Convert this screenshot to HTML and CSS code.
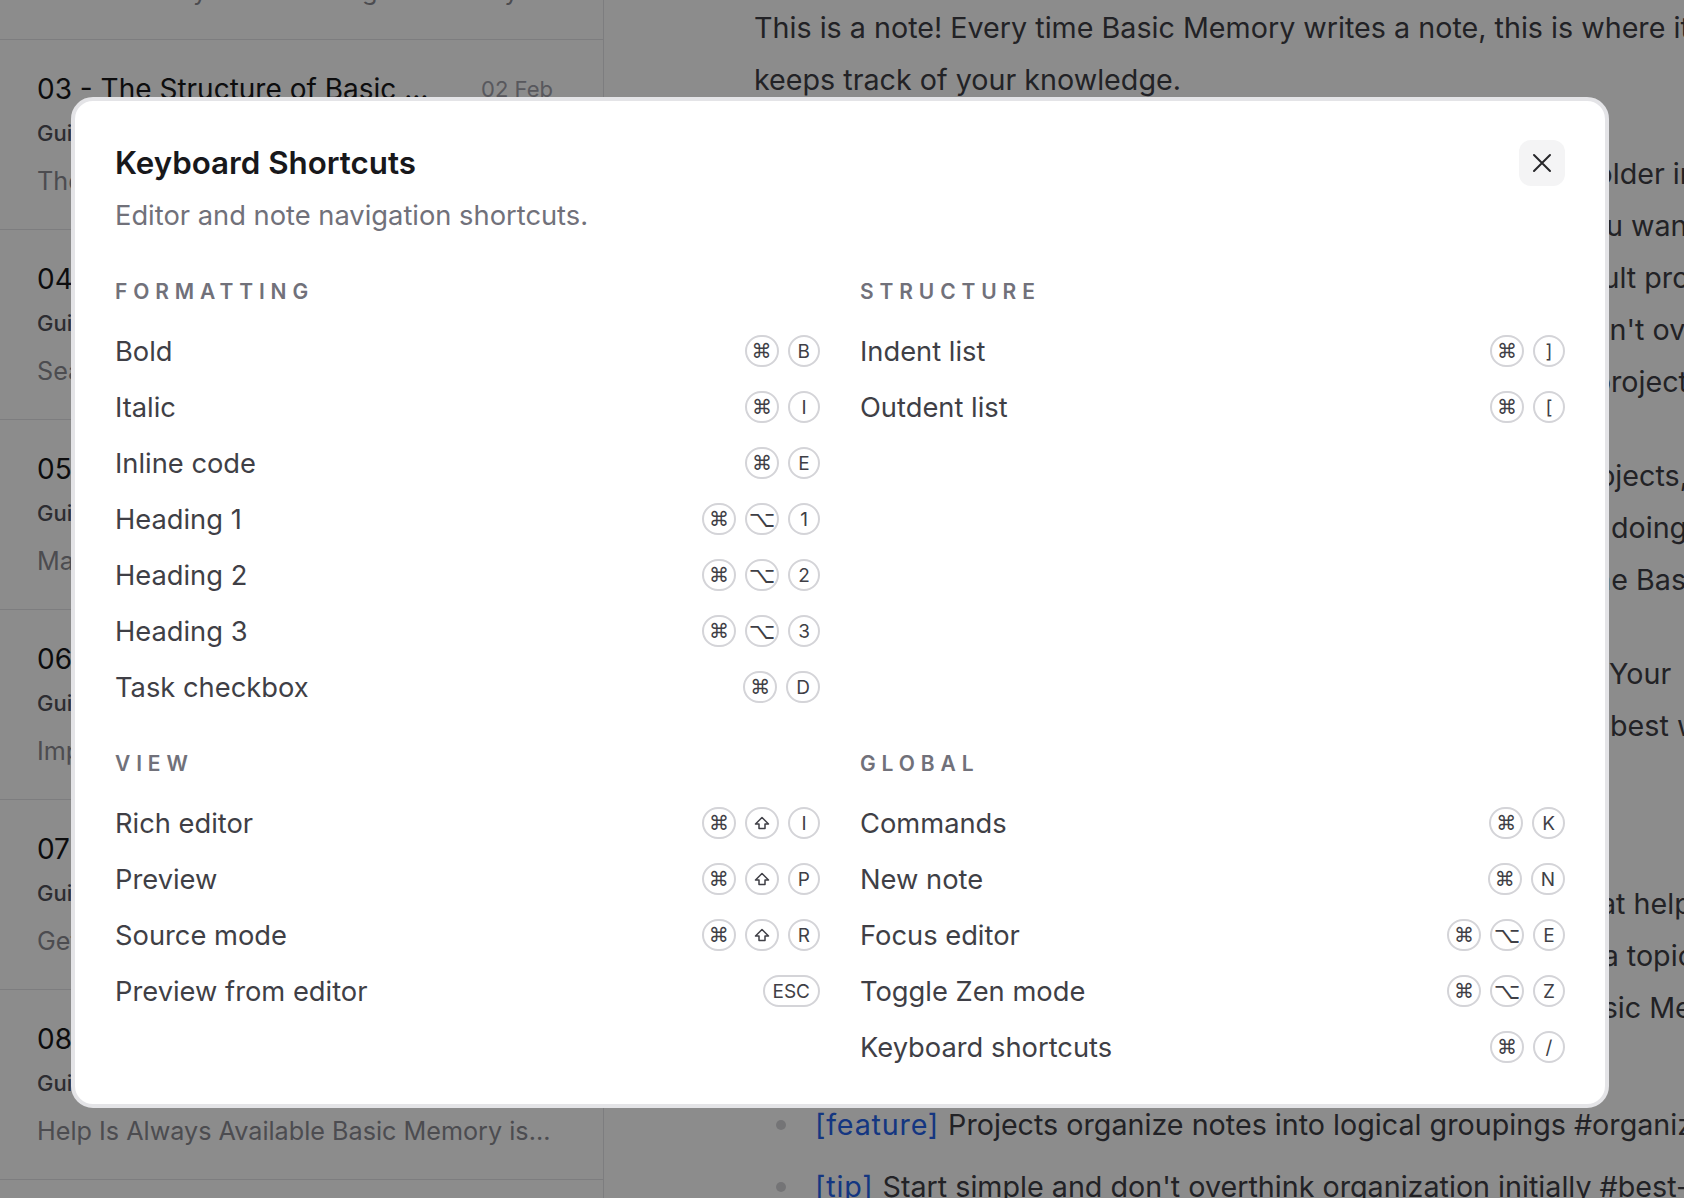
FILE: index.html
```html
<!DOCTYPE html>
<html lang="en">
<head>
  <meta charset="UTF-8">
  <meta name="viewport" content="width=device-width, initial-scale=1.0">
  <title>Basic Memory</title>
  <link rel="stylesheet" href="styles.css">
</head>
<body>
  <div class="app">
    <aside class="sidebar">
      <ul class="notes">
        <li class="note">
          <div class="note-top"><span class="note-title">02 - Getting Started with Basic Memory</span><span class="note-date">02 Feb</span></div>
          <div class="note-folder">Guides</div>
          <div class="note-preview">Basic Memory is a knowledge base for you and your AI...</div>
        </li>
        <li class="note">
          <div class="note-top"><span class="note-title">03 - The Structure of Basic Memory</span><span class="note-date">02 Feb</span></div>
          <div class="note-folder">Guides</div>
          <div class="note-preview">The Structure of Basic Memory Notes live in...</div>
        </li>
        <li class="note">
          <div class="note-top"><span class="note-title">04 - Searching Your Notes</span><span class="note-date">02 Feb</span></div>
          <div class="note-folder">Guides</div>
          <div class="note-preview">Search Finds Notes by Meaning Basic Memory...</div>
        </li>
        <li class="note">
          <div class="note-top"><span class="note-title">05 - Markdown Basics</span><span class="note-date">02 Feb</span></div>
          <div class="note-folder">Guides</div>
          <div class="note-preview">Markdown Is Plain Text With a Few Rules...</div>
        </li>
        <li class="note">
          <div class="note-top"><span class="note-title">06 - Importing Notes</span><span class="note-date">02 Feb</span></div>
          <div class="note-folder">Guides</div>
          <div class="note-preview">Importing Brings Your Existing Notes In...</div>
        </li>
        <li class="note">
          <div class="note-top"><span class="note-title">07 - Working With Claude</span><span class="note-date">02 Feb</span></div>
          <div class="note-folder">Guides</div>
          <div class="note-preview">Getting the Most From Your Assistant...</div>
        </li>
        <li class="note">
          <div class="note-top"><span class="note-title">08 - Getting Help</span><span class="note-date">02 Feb</span></div>
          <div class="note-folder">Guides</div>
          <div class="note-preview">Help Is Always Available Basic Memory is...</div>
        </li>
      </ul>
    </aside>

    <main class="editor">
      <article class="doc">
        <p>This is a note! Every time Basic Memory writes a note, this is where it<br>keeps track of your knowledge.</p>
        <p>Basic Memory sorts notes in projects. Every project lives in a folder in your<br>
          on your machine. You can add as many folders to this list as you want,<br>
          to keep office and home notes apart. New notes go to the default project<br>
          unless you pick another one, so once you're getting started, don't overthink it.<br>
          Later, you can easily move a note from one project to another project.</p>
        <p>If you work on several things at once, you can hop between projects,<br>
          from the sidebar, and keep every one focused on what you are doing<br>
          right now. Every project is indexed and synced separately by the Basic Memory</p>
        <p>Projects also make it simple to send a set of notes into Claude. Your<br>
          knowledge stays on your computer, as plain docs, which is the best way</p>
        <h2>How it works</h2>
        <p>Notes are written in Markdown with a few extra conventions that help<br>
          Basic Memory understand them. Observations are facts about a topic,<br>
          and relations link notes together, so your assistant can read Basic Memory</p>
        <ul class="obs">
          <li><span class="tag">[feature]</span> Projects organize notes into logical groupings #organization</li>
          <li><span class="tag">[tip]</span> Start simple and don't overthink organization initially #best-practices</li>
        </ul>
      </article>
    </main>
  </div>

  <div class="backdrop">
    <div class="dialog" role="dialog" aria-labelledby="kb-title">
      <header class="dialog-head">
        <div>
          <h2 class="dialog-title" id="kb-title">Keyboard Shortcuts</h2>
          <p class="dialog-desc">Editor and note navigation shortcuts.</p>
        </div>
        <button class="close" type="button" aria-label="Close">
          <svg width="20" height="20" viewBox="0 0 20 20" fill="none" stroke="currentColor" stroke-width="2" stroke-linecap="round"><path d="M2 2l16 16M18 2L2 18"/></svg>
        </button>
      </header>

      <div class="groups">
        <section class="group">
          <h3>Formatting</h3>
          <ul class="shortcuts">
            <li><span>Bold</span><span class="combo"><kbd class="sym">⌘</kbd><kbd>B</kbd></span></li>
            <li><span>Italic</span><span class="combo"><kbd class="sym">⌘</kbd><kbd>I</kbd></span></li>
            <li><span>Inline code</span><span class="combo"><kbd class="sym">⌘</kbd><kbd>E</kbd></span></li>
            <li><span>Heading 1</span><span class="combo"><kbd class="sym">⌘</kbd><kbd class="sym opt">⌥</kbd><kbd>1</kbd></span></li>
            <li><span>Heading 2</span><span class="combo"><kbd class="sym">⌘</kbd><kbd class="sym opt">⌥</kbd><kbd>2</kbd></span></li>
            <li><span>Heading 3</span><span class="combo"><kbd class="sym">⌘</kbd><kbd class="sym opt">⌥</kbd><kbd>3</kbd></span></li>
            <li><span>Task checkbox</span><span class="combo"><kbd class="sym">⌘</kbd><kbd>D</kbd></span></li>
          </ul>
        </section>

        <section class="group">
          <h3>Structure</h3>
          <ul class="shortcuts">
            <li><span>Indent list</span><span class="combo"><kbd class="sym">⌘</kbd><kbd>]</kbd></span></li>
            <li><span>Outdent list</span><span class="combo"><kbd class="sym">⌘</kbd><kbd>[</kbd></span></li>
          </ul>
        </section>

        <section class="group">
          <h3>View</h3>
          <ul class="shortcuts">
            <li><span>Rich editor</span><span class="combo"><kbd class="sym">⌘</kbd><kbd class="sym" aria-label="Shift"><svg class="shift" viewBox="0 0 16 14"><path d="M8 1.5 1.5 8H5v4.5h6V8h3.5z"/></svg></kbd><kbd>I</kbd></span></li>
            <li><span>Preview</span><span class="combo"><kbd class="sym">⌘</kbd><kbd class="sym" aria-label="Shift"><svg class="shift" viewBox="0 0 16 14"><path d="M8 1.5 1.5 8H5v4.5h6V8h3.5z"/></svg></kbd><kbd>P</kbd></span></li>
            <li><span>Source mode</span><span class="combo"><kbd class="sym">⌘</kbd><kbd class="sym" aria-label="Shift"><svg class="shift" viewBox="0 0 16 14"><path d="M8 1.5 1.5 8H5v4.5h6V8h3.5z"/></svg></kbd><kbd>R</kbd></span></li>
            <li><span>Preview from editor</span><span class="combo"><kbd>ESC</kbd></span></li>
          </ul>
        </section>

        <section class="group">
          <h3>Global</h3>
          <ul class="shortcuts">
            <li><span>Commands</span><span class="combo"><kbd class="sym">⌘</kbd><kbd>K</kbd></span></li>
            <li><span>New note</span><span class="combo"><kbd class="sym">⌘</kbd><kbd>N</kbd></span></li>
            <li><span>Focus editor</span><span class="combo"><kbd class="sym">⌘</kbd><kbd class="sym opt">⌥</kbd><kbd>E</kbd></span></li>
            <li><span>Toggle Zen mode</span><span class="combo"><kbd class="sym">⌘</kbd><kbd class="sym opt">⌥</kbd><kbd>Z</kbd></span></li>
            <li><span>Keyboard shortcuts</span><span class="combo"><kbd class="sym">⌘</kbd><kbd>/</kbd></span></li>
          </ul>
        </section>
      </div>
    </div>
  </div>
</body>
</html>
```

FILE: styles.css
```css
* {
  box-sizing: border-box;
}

html, body {
  margin: 0;
  height: 100%;
}

body {
  font-family: Inter, "Noto Sans", sans-serif;
  color: #3f3f46;
  background: #fff;
  overflow: hidden;
}

ul {
  list-style: none;
  margin: 0;
  padding: 0;
}

/* app behind the dialog */
.app {
  display: flex;
  height: 100%;
}

.sidebar {
  flex: 0 0 604px;
  border-right: 1px solid #e4e4e7;
  overflow: hidden;
}

.notes {
  margin-top: -150px;
}

.note {
  padding: 33px 50px 32px 37px;
  border-bottom: 1px solid #e4e4e7;
}

.note-top {
  display: flex;
  align-items: center;
  gap: 32px;
  height: 32px;
}

.note-title {
  flex: 1;
  min-width: 0;
  font-size: 28px;
  color: #18181b;
  white-space: nowrap;
  overflow: hidden;
  text-overflow: ellipsis;
}

.note-date {
  font-size: 22px;
  color: #a1a1aa;
  white-space: nowrap;
}

.note-folder {
  margin-top: 14px;
  line-height: 28px;
  font-size: 22px;
  font-weight: 500;
  color: #52525b;
}

.note-preview {
  margin-top: 18px;
  line-height: 32px;
  font-size: 25.2px;
  color: #8b8b93;
  white-space: nowrap;
  overflow: hidden;
}

.editor {
  flex: 1;
  min-width: 0;
  overflow: hidden;
}

.doc {
  padding: 2px 0 0 150px;
  font-size: 28.7px;
  line-height: 52px;
  color: #3f3f46;
  white-space: nowrap;
}

.doc p {
  margin: 0 0 42px;
}

.doc h2 {
  margin: 0 0 36px;
  font-size: 34px;
  line-height: 48px;
  font-weight: 600;
}

.obs {
  margin-top: 65px;
}

.obs li {
  display: flex;
  align-items: center;
}

.obs li + li {
  margin-top: 10px;
}

.obs li::before {
  content: "";
  flex: none;
  width: 10px;
  height: 10px;
  margin: 0 29px 0 22px;
  border-radius: 50%;
  background: #d4d4d8;
}

.tag {
  color: #2563eb;
  letter-spacing: 0.8px;
  margin-right: 9px;
}

/* dialog */
.backdrop {
  position: fixed;
  inset: 0;
  display: flex;
  justify-content: center;
  align-items: flex-start;
  padding: 97px 4px 0 0;
  background: rgba(0, 0, 0, 0.45);
}

.dialog {
  width: 1538px;
  padding: 40px 40px 37px;
  background: #fff;
  border: 4px solid #e4e4e7;
  border-radius: 22px;
}

.dialog-head {
  display: flex;
  justify-content: space-between;
  align-items: flex-start;
}

.dialog-title {
  margin: 0;
  font-size: 31.3px;
  line-height: 44px;
  font-weight: 600;
  color: #18181b;
}

.dialog-desc {
  margin: 13px 0 0;
  font-size: 27.3px;
  line-height: 36px;
  color: #71717a;
}

.close {
  display: flex;
  align-items: center;
  justify-content: center;
  width: 46px;
  height: 46px;
  margin-top: -1px;
  padding: 0;
  border: none;
  border-radius: 12px;
  background: #f4f4f5;
  color: #27272a;
  cursor: pointer;
}

.groups {
  display: grid;
  grid-template-columns: 1fr 1fr;
  column-gap: 40px;
  row-gap: 43px;
  margin-top: 44px;
}

.group h3 {
  margin: 0 0 25px;
  font-size: 21px;
  line-height: 28px;
  font-weight: 600;
  letter-spacing: 0.28em;
  text-transform: uppercase;
  color: #71717a;
}

.shortcuts {
  display: flex;
  flex-direction: column;
  gap: 16px;
}

.shortcuts li {
  display: flex;
  align-items: center;
  justify-content: space-between;
  height: 40px;
  font-size: 27.3px;
  color: #3f3f46;
}

.combo {
  display: flex;
  gap: 9px;
}

kbd {
  display: inline-flex;
  align-items: center;
  justify-content: center;
  min-width: 32px;
  height: 32px;
  padding: 0 8px;
  border: 2px solid #d4d4d8;
  border-radius: 16px;
  font-family: Inter, "Noto Sans", sans-serif;
  font-size: 19px;
  line-height: 1;
  color: #3f3f46;
}

kbd.sym {
  min-width: 34px;
  padding: 0;
  font-family: "DejaVu Sans", sans-serif;
  font-size: 20px;
}

kbd.opt {
  font-size: 23px;
}

.shift {
  width: 16px;
  height: 14px;
  fill: none;
  stroke: currentColor;
  stroke-width: 1.5;
  stroke-linejoin: round;
}
```
